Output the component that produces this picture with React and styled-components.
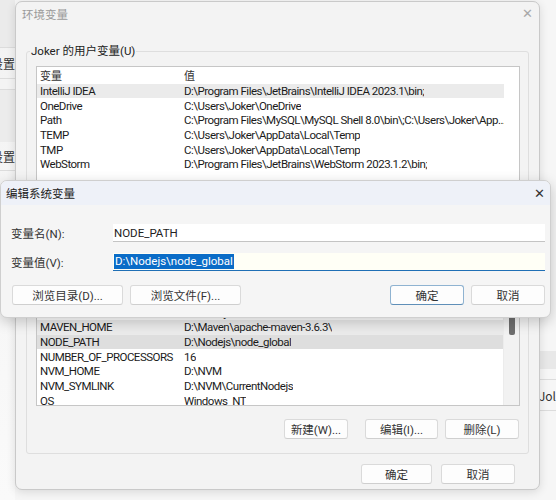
import React from 'react';
import styled, { createGlobalStyle, css } from 'styled-components';

const GlobalStyle = createGlobalStyle`
  html, body {
    margin: 0;
    padding: 0;
    background: #f4f4f4;
  }
  body {
    font-family: Roboto, "Noto Sans CJK SC", sans-serif;
    font-size: 11px;
    color: #1b1b1b;
  }
`;

const userVars = [
  ['IntelliJ IDEA', 'D:\\Program Files\\JetBrains\\IntelliJ IDEA 2023.1\\bin;'],
  ['OneDrive', 'C:\\Users\\Joker\\OneDrive'],
  ['Path', 'C:\\Program Files\\MySQL\\MySQL Shell 8.0\\bin\\;C:\\Users\\Joker\\App...'],
  ['TEMP', 'C:\\Users\\Joker\\AppData\\Local\\Temp'],
  ['TMP', 'C:\\Users\\Joker\\AppData\\Local\\Temp'],
  ['WebStorm', 'D:\\Program Files\\JetBrains\\WebStorm 2023.1.2\\bin;'],
];

const sysVars = [
  ['ComSpec', 'C:\\Windows\\system32\\cmd.exe'],
  ['DriverData', 'C:\\Windows\\System32\\Drivers\\DriverData'],
  ['JAVA_HOME', 'D:\\Java\\jdk-17'],
  ['MAVEN_HOME', 'D:\\Maven\\apache-maven-3.6.3\\'],
  ['NODE_PATH', 'D:\\Nodejs\\node_global'],
  ['NUMBER_OF_PROCESSORS', '16'],
  ['NVM_HOME', 'D:\\NVM'],
  ['NVM_SYMLINK', 'D:\\NVM\\CurrentNodejs'],
  ['OS', 'Windows_NT'],
];

export default function App() {
  return (
    <>
      <GlobalStyle />
      <Desktop>
        <BackWindow>
          <BackStrip>
            <BackBand $h={47} $bg="#ebebeb" />
            <BackLine />
            <BackCell $h={30}>设置</BackCell>
            <BackLine />
            <BackBand $h={10} $bg="#f4f4f4" />
            <BackLine />
            <BackBand $h={52} $bg="#ececec" />
            <BackCell $h={28}>设置</BackCell>
            <BackLine />
          </BackStrip>
          <BackRight>
            <BackBand $h={18} $bg="#e8e8e8" />
            <BackBand $h={10} $bg="#f6f6f6" />
            <BackLine />
            <BackCell $h={30}>\Jol</BackCell>
            <BackLine />
          </BackRight>
        </BackWindow>

        <MainDialog>
          <TitleBar>
            <TitleText $dim>环境变量</TitleText>
            <CloseGlyph $dim>✕</CloseGlyph>
          </TitleBar>
          <Content>
            <Group $h={180}>
              <GroupLabel>Joker 的用户变量(U)</GroupLabel>
              <ListBox $h={125}>
                <RowStack>
                  <Row $header>
                    <NameCell>变量</NameCell>
                    <ValueCell>值</ValueCell>
                  </Row>
                  {userVars.map(([n, v], i) => (
                    <Row key={n} $state={i === 0 ? 'hover' : undefined}>
                      <NameCell>{n}</NameCell>
                      <ValueCell>{v}</ValueCell>
                    </Row>
                  ))}
                </RowStack>
              </ListBox>
            </Group>
            <Group $h={201} $last>
              <GroupLabel>系统变量(S)</GroupLabel>
              <ListBox $h={138} $bottom>
                <ScrollTrack>
                  <ScrollThumb />
                </ScrollTrack>
                <RowStack $shift={3}>
                  {sysVars.map(([n, v]) => (
                    <Row
                      key={n}
                      $scroll
                      $state={n === 'NODE_PATH' ? 'selected' : n === 'MAVEN_HOME' ? 'hover' : undefined}
                    >
                      <NameCell>{n}</NameCell>
                      <ValueCell>{v}</ValueCell>
                    </Row>
                  ))}
                </RowStack>
              </ListBox>
              <ButtonRow>
                <Button $w={64} $mr={17}>新建(W)...</Button>
                <Button $w={73} $mr={7}>编辑(I)...</Button>
                <Button $w={74}>删除(L)</Button>
              </ButtonRow>
            </Group>
            <FooterRow>
              <Button $w={71} $mr={9}>确定</Button>
              <Button $w={74}>取消</Button>
            </FooterRow>
          </Content>
        </MainDialog>

        <EditDialog>
          <EditTitleBar>
            <TitleText>编辑系统变量</TitleText>
            <CloseGlyph>✕</CloseGlyph>
          </EditTitleBar>
          <EditBody>
            <FieldRow>
              <FieldLabel>变量名(N):</FieldLabel>
              <Field>NODE_PATH</Field>
            </FieldRow>
            <FieldRow>
              <FieldLabel>变量值(V):</FieldLabel>
              <Field $focused>
                <Selected>D:\Nodejs\node_global</Selected>
              </Field>
            </FieldRow>
            <EditButtons>
              <Button $w={111} $mr={7}>浏览目录(D)...</Button>
              <Button $w={111}>浏览文件(F)...</Button>
              <Spacer />
              <Button $w={74} $mr={7} $default>确定</Button>
              <Button $w={74}>取消</Button>
            </EditButtons>
          </EditBody>
        </EditDialog>
      </Desktop>
    </>
  );
}

const Desktop = styled.div`
  position: relative;
  width: 556px;
  height: 500px;
  overflow: hidden;
  background: #f6f6f6;
`;

const BackWindow = styled.div`
  position: absolute;
  inset: 0;
  display: flex;
  justify-content: space-between;
  color: #333;
  font-size: 12px;
`;

const BackStrip = styled.div`
  width: 15px;
  display: flex;
  flex-direction: column;
  align-items: flex-end;
  overflow: hidden;
  white-space: nowrap;
  background: linear-gradient(#f2f2f2, #fafafa);
`;

const BackRight = styled.div`
  width: 16px;
  padding-top: 351px;
  display: flex;
  flex-direction: column;
  overflow: hidden;
  white-space: nowrap;
`;

const BackBand = styled.div`
  height: ${(p) => p.$h}px;
  width: 100%;
  flex-shrink: 0;
  background: ${(p) => p.$bg};
`;

const BackLine = styled.div`
  height: 1px;
  width: 100%;
  flex-shrink: 0;
  background: #dcdcdc;
`;

const BackCell = styled.div`
  height: ${(p) => p.$h}px;
  flex-shrink: 0;
  display: flex;
  align-items: center;
  justify-content: flex-end;
  font-family: "Noto Sans CJK SC", sans-serif;
`;

const MainDialog = styled.div`
  position: absolute;
  left: 15px;
  top: 1px;
  width: 525px;
  height: 489px;
  box-sizing: border-box;
  background: #f3f3f3;
  border: 1px solid #c9c9c9;
  border-radius: 7px;
  box-shadow: 0 2px 10px rgba(0, 0, 0, 0.12);
  display: flex;
  flex-direction: column;
`;

const TitleBar = styled.div`
  height: 23px;
  flex-shrink: 0;
  display: flex;
  align-items: center;
  justify-content: space-between;
  padding: 0 6px 0 6px;
`;

const TitleText = styled.span`
  font-family: "Noto Sans CJK SC", sans-serif;
  font-size: 11.5px;
  color: ${(p) => (p.$dim ? '#9a9a9a' : '#1b1b1b')};
`;

const CloseGlyph = styled.span`
  font-family: "DejaVu Sans", sans-serif;
  font-size: 13px;
  color: ${(p) => (p.$dim ? '#a8a8a8' : '#333')};
  line-height: 1;
`;

const Content = styled.div`
  flex: 1;
  display: flex;
  flex-direction: column;
  padding: 26px 10px 0 10px;
`;

const Group = styled.div`
  position: relative;
  height: ${(p) => p.$h}px;
  flex-shrink: 0;
  box-sizing: border-box;
  border: 1px solid #dedede;
  border-radius: 3px;
  padding: 14px 8px 0 9px;
  margin-bottom: ${(p) => (p.$last ? 10 : 22)}px;
  display: flex;
  flex-direction: column;
`;

const GroupLabel = styled.div`
  position: absolute;
  top: -9px;
  left: 3px;
  padding: 0 1px;
  background: #f3f3f3;
  font-size: 11.5px;
  color: #222;
  line-height: 16px;
`;

const ListBox = styled.div`
  position: relative;
  height: ${(p) => p.$h}px;
  flex-shrink: 0;
  box-sizing: border-box;
  background: #fff;
  border: 1px solid #c6c6c6;
  overflow: hidden;
  display: flex;
  flex-direction: column;
  justify-content: ${(p) => (p.$bottom ? 'flex-end' : 'flex-start')};
`;

const RowStack = styled.div`
  display: flex;
  flex-direction: column;
  flex-shrink: 0;
  margin-bottom: ${(p) => -(p.$shift || 0)}px;
`;

const ScrollTrack = styled.div`
  position: absolute;
  top: 0;
  right: 0;
  bottom: 0;
  width: 15px;
  background: #f2f2f2;
  border-left: 1px solid #ececec;
`;

const ScrollThumb = styled.div`
  position: absolute;
  right: 4px;
  top: 47px;
  width: 6px;
  height: 19px;
  border-radius: 2px;
  background: #6e6e6e;
`;

const Row = styled.div`
  display: flex;
  height: 14.7px;
  flex-shrink: 0;
  align-items: center;
  padding-left: 3px;
  line-height: 14px;
  font-size: 11.5px;
  letter-spacing: -0.5px;
  white-space: nowrap;
  margin-right: ${(p) => (p.$scroll ? 16 : 15)}px;
  ${(p) =>
    p.$header &&
    css`
      height: 16.5px;
      color: #333;
      font-size: 11px;
      letter-spacing: 0;
      font-family: "Noto Sans CJK SC", sans-serif;
    `}
  ${(p) =>
    p.$state === 'hover' &&
    css`
      background: #ebebeb;
    `}
  ${(p) =>
    p.$state === 'selected' &&
    css`
      background: #dedede;
    `}
`;

const NameCell = styled.span`
  width: 144px;
  flex-shrink: 0;
`;

const ValueCell = styled.span`
  overflow: hidden;
`;

const ButtonRow = styled.div`
  display: flex;
  justify-content: flex-end;
  margin-top: 13px;
  margin-right: 1px;
`;

const Button = styled.div`
  width: ${(p) => p.$w}px;
  margin-right: ${(p) => p.$mr || 0}px;
  height: 20px;
  flex-shrink: 0;
  box-sizing: border-box;
  display: flex;
  align-items: center;
  justify-content: center;
  background: #fdfdfd;
  border: 1px solid ${(p) => (p.$default ? '#8fb3d1' : '#dadada')};
  border-bottom-color: ${(p) => (p.$default ? '#5f8fb8' : '#cfcfcf')};
  border-radius: 3px;
  font-size: 11.5px;
  color: #333;
  white-space: nowrap;
`;

const FooterRow = styled.div`
  display: flex;
  justify-content: flex-end;
  padding-right: 14px;
`;

const EditDialog = styled.div`
  position: absolute;
  left: 0;
  top: 180px;
  width: 551px;
  height: 138px;
  box-sizing: border-box;
  background: #f5f5f5;
  border: 1px solid #cfcfcf;
  border-radius: 7px;
  box-shadow: 0 4px 14px rgba(0, 0, 0, 0.2);
  overflow: hidden;
  display: flex;
  flex-direction: column;
`;

const EditTitleBar = styled.div`
  height: 24px;
  flex-shrink: 0;
  display: flex;
  align-items: center;
  justify-content: space-between;
  padding: 0 5px 0 5px;
  background: #eef1f8;
`;

const EditBody = styled.div`
  flex: 1;
  display: flex;
  flex-direction: column;
  padding: 19px 5px 0 10px;
`;

const FieldRow = styled.div`
  display: flex;
  align-items: center;
  height: 18px;
  margin-bottom: 11px;
`;

const FieldLabel = styled.span`
  width: 102px;
  flex-shrink: 0;
  font-size: 11.5px;
  color: #333;
`;

const Field = styled.div`
  flex: 1;
  height: 18px;
  box-sizing: border-box;
  display: flex;
  align-items: center;
  padding-left: 1px;
  background: ${(p) => (p.$focused ? '#fffff6' : '#fff')};
  border-bottom: 1px solid ${(p) => (p.$focused ? '#1f6fb5' : '#c4c4c4')};
  font-size: 11.5px;
  color: #222;
`;

const Selected = styled.span`
  background: #0a6cc7;
  color: #fff;
  line-height: 15px;
  padding: 0 1px;
`;

const EditButtons = styled.div`
  display: flex;
  margin-top: 3px;
  padding-left: 1px;
`;

const Spacer = styled.div`
  flex: 1;
`;
